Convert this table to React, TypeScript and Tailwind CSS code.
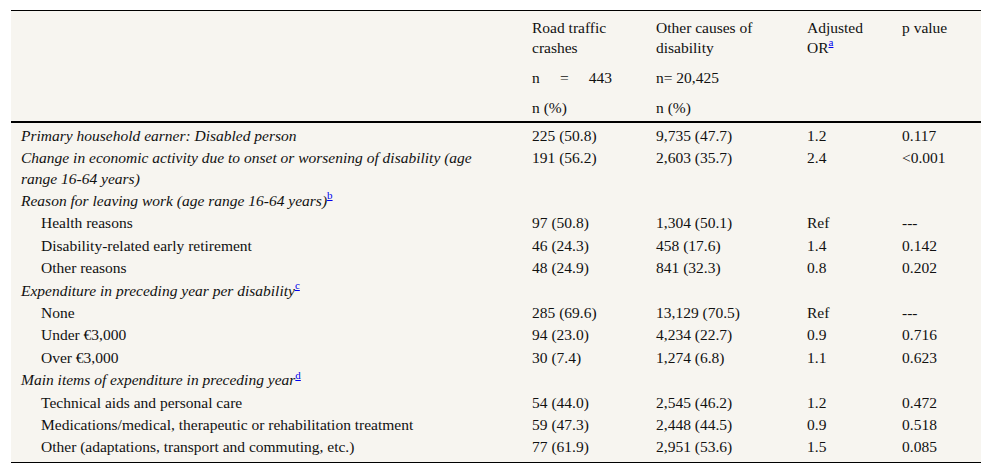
import React from "react";

const Sup = ({ c }: { c: string }) => (
  <sup className="not-italic text-[11px] text-[#0000ee] underline leading-[0] relative top-[-0.6em] align-baseline">{c}</sup>
);

type Row = { label: React.ReactNode; kind: "h" | "i"; v?: [string, string, string, string] };

const rows: Row[] = [
  { label: "Primary household earner: Disabled person", kind: "h", v: ["225 (50.8)", "9,735 (47.7)", "1.2", "0.117"] },
  { label: "Change in economic activity due to onset or worsening of disability (age range 16-64 years)", kind: "h", v: ["191 (56.2)", "2,603 (35.7)", "2.4", "<0.001"] },
  { label: <>Reason for leaving work (age range 16-64 years)<Sup c="b" /></>, kind: "h" },
  { label: "Health reasons", kind: "i", v: ["97 (50.8)", "1,304 (50.1)", "Ref", "---"] },
  { label: "Disability-related early retirement", kind: "i", v: ["46 (24.3)", "458 (17.6)", "1.4", "0.142"] },
  { label: "Other reasons", kind: "i", v: ["48 (24.9)", "841 (32.3)", "0.8", "0.202"] },
  { label: <>Expenditure in preceding year per disability<Sup c="c" /></>, kind: "h" },
  { label: "None", kind: "i", v: ["285 (69.6)", "13,129 (70.5)", "Ref", "---"] },
  { label: "Under €3,000", kind: "i", v: ["94 (23.0)", "4,234 (22.7)", "0.9", "0.716"] },
  { label: "Over €3,000", kind: "i", v: ["30 (7.4)", "1,274 (6.8)", "1.1", "0.623"] },
  { label: <>Main items of expenditure in preceding year<Sup c="d" /></>, kind: "h" },
  { label: "Technical aids and personal care", kind: "i", v: ["54 (44.0)", "2,545 (46.2)", "1.2", "0.472"] },
  { label: "Medications/medical, therapeutic or rehabilitation treatment", kind: "i", v: ["59 (47.3)", "2,448 (44.5)", "0.9", "0.518"] },
  { label: "Other (adaptations, transport and commuting, etc.)", kind: "i", v: ["77 (61.9)", "2,951 (53.6)", "1.5", "0.085"] },
];

export default function App() {
  return (
    <div className="w-[992px] h-[475px] bg-white pt-[10px] px-[11px] text-[15.5px] text-[#111]" style={{ fontFamily: '"Liberation Serif", "Times New Roman", serif' }}>
      <table className="w-[970px] table-fixed border-collapse bg-[#f7f5f0]">
        <colgroup>
          <col className="w-[511px]" />
          <col className="w-[124px]" />
          <col className="w-[151px]" />
          <col className="w-[95px]" />
          <col className="w-[89px]" />
        </colgroup>
        <thead>
          <tr className="border-t border-black border-b-2 border-b-black align-top leading-[20px]">
            <th className="pt-[7px] pb-[3px]" />
            <th className="pl-[10px] pr-[4px] pt-[7px] pb-[3px] font-normal text-left">
              <div>Road traffic crashes</div>
              <div className="mt-[10px] flex w-[80px] justify-between"><span>n</span><span>=</span><span>443</span></div>
              <div className="mt-[10px]">n (%)</div>
            </th>
            <th className="pl-[10px] pr-[4px] pt-[7px] pb-[3px] font-normal text-left">
              <div>Other causes of disability</div>
              <div className="mt-[10px]">n= 20,425</div>
              <div className="mt-[10px]">n (%)</div>
            </th>
            <th className="pl-[10px] pr-[10px] pt-[7px] pb-[3px] font-normal text-left">
              <div>Adjusted OR<Sup c="a" /></div>
            </th>
            <th className="pl-[10px] pt-[7px] pb-[3px] font-normal text-left">
              <div>p value</div>
            </th>
          </tr>
        </thead>
        <tbody className="border-b border-black">
          {rows.map((r, i) => (
            <tr key={i} className="align-top leading-[20.2px]">
              <td className={`py-[1.1px] pr-[22px] ${r.kind === "h" ? "pl-[10px] italic" : "pl-[30px]"} ${i === 0 ? "pt-[3px]" : ""}`}>{r.label}</td>
              {[0, 1, 2, 3].map((j) => (
                <td key={j} className={`py-[1.1px] pl-[10px] ${i === 0 ? "pt-[3px]" : ""}`}>{r.v ? r.v[j] : ""}</td>
              ))}
            </tr>
          ))}
          <tr><td colSpan={5} className="h-[4px] p-0" /></tr>
        </tbody>
      </table>
    </div>
  );
}
